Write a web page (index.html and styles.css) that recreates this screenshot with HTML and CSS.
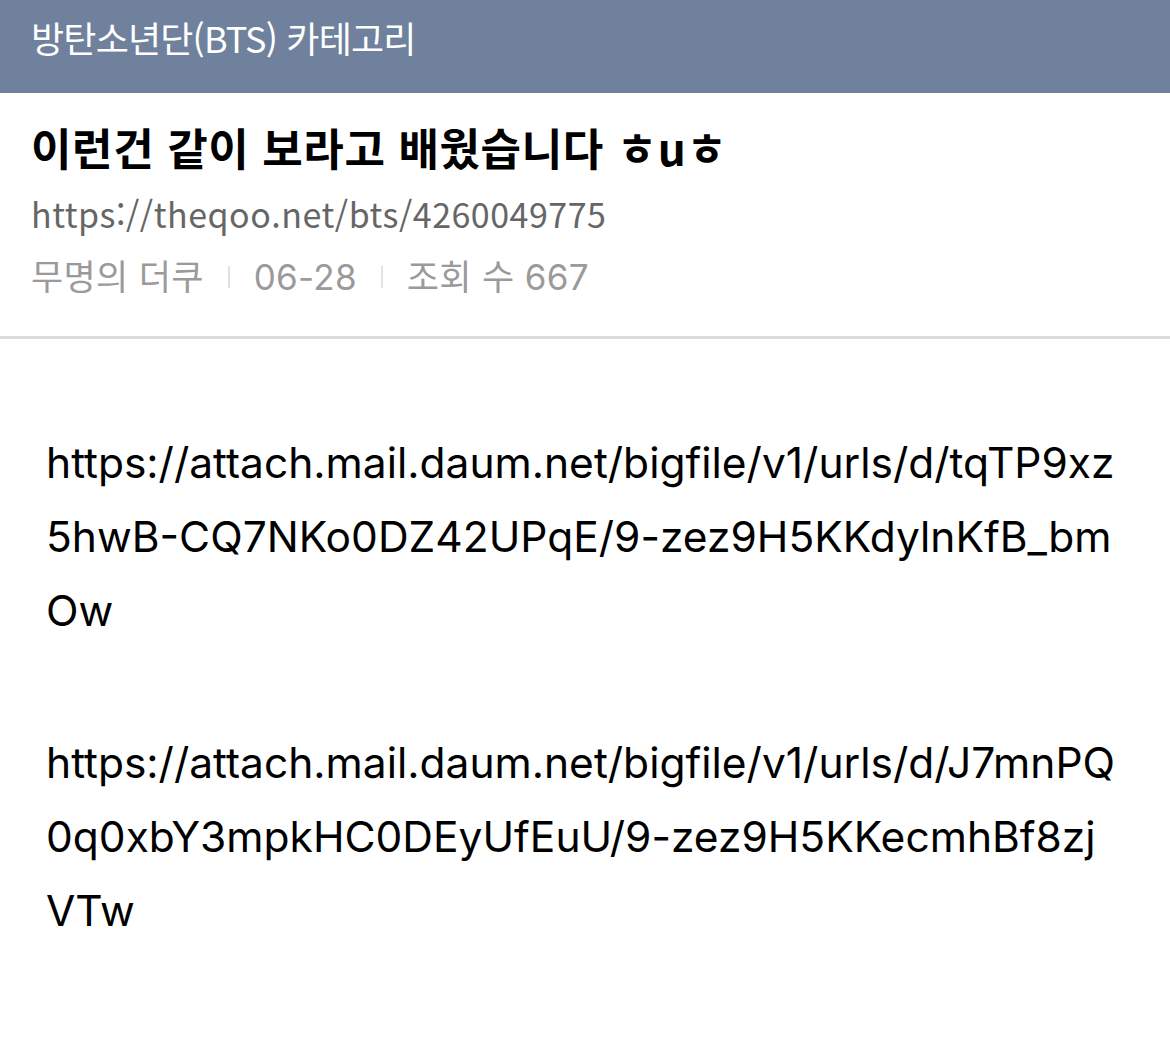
FILE: index.html
```html
<!DOCTYPE html>
<html lang="ko">
<head>
  <meta charset="UTF-8">
  <meta name="viewport" content="width=device-width, initial-scale=1.0">
  <title>이런건 같이 보라고 배웠습니다 ㅎuㅎ</title>
  <link rel="stylesheet" href="styles.css">
</head>
<body>
  <!-- Category Bar -->
  <div class="category-bar">방탄소년단(BTS) 카테고리</div>

  <!-- Post Header -->
  <div class="post-head">
    <h1 class="post-title">이런건 같이 보라고 배웠습니다 ㅎuㅎ</h1>
    <div class="post-url">https://theqoo.net/bts/4260049775</div>
    <div class="post-meta">
      <span>무명의 더쿠</span>
      <span class="sep"></span>
      <span>06-28</span>
      <span class="sep"></span>
      <span>조회 수 667</span>
    </div>
  </div>

  <!-- Post Body -->
  <div class="post-body">
    <p>https://attach.mail.daum.net/bigfile/v1/urls/d/tqTP9xz5hwB-CQ7NKo0DZ42UPqE/9-zez9H5KKdylnKfB_bmOw</p>
    <p>https://attach.mail.daum.net/bigfile/v1/urls/d/J7mnPQ0q0xbY3mpkHC0DEyUfEuU/9-zez9H5KKecmhBf8zjVTw</p>
  </div>
</body>
</html>
```

FILE: styles.css
```css
/* General Styles */
body {
  font-family: 'Noto Sans CJK KR', 'Noto Sans', sans-serif;
  background-color: #ffffff;
  color: #111;
  margin: 0;
  padding: 0;
}

/* Category Bar */
.category-bar {
  height: 93px;
  box-sizing: border-box;
  padding: 13px 0 0 31px;
  background-color: #6f819c;
  color: #fff;
  font-size: 36px;
  letter-spacing: -0.8px;
  line-height: 48px;
}

/* Post Header */
.post-head {
  padding: 22px 30px 30px 31px;
  border-bottom: 3px solid #dcdcdc;
}

.post-title {
  margin: 0;
  font-size: 44px;
  font-weight: 700;
  line-height: 64px;
  letter-spacing: 0.6px;
  color: #000;
}

.post-url {
  margin-top: 6px;
  font-size: 34px;
  line-height: 58px;
  color: #666;
  letter-spacing: 0.5px;
}

.post-meta {
  display: flex;
  align-items: center;
  margin-top: 5px;
  font-family: 'Inter', 'Noto Sans CJK KR', sans-serif;
  font-size: 35px;
  line-height: 58px;
  color: #9a9a9a;
  letter-spacing: 0.3px;
}

.post-meta .sep {
  width: 2px;
  height: 22px;
  margin: 0 24px;
  background-color: #e2e2e2;
}

/* Post Body */
.post-body {
  padding: 87px 50px 40px 46px;
}

.post-body p {
  margin: 0 0 78px;
  font-family: 'Inter', 'Noto Sans CJK KR', sans-serif;
  font-size: 42.5px;
  line-height: 74px;
  color: #000;
  word-break: break-all;
}
```
